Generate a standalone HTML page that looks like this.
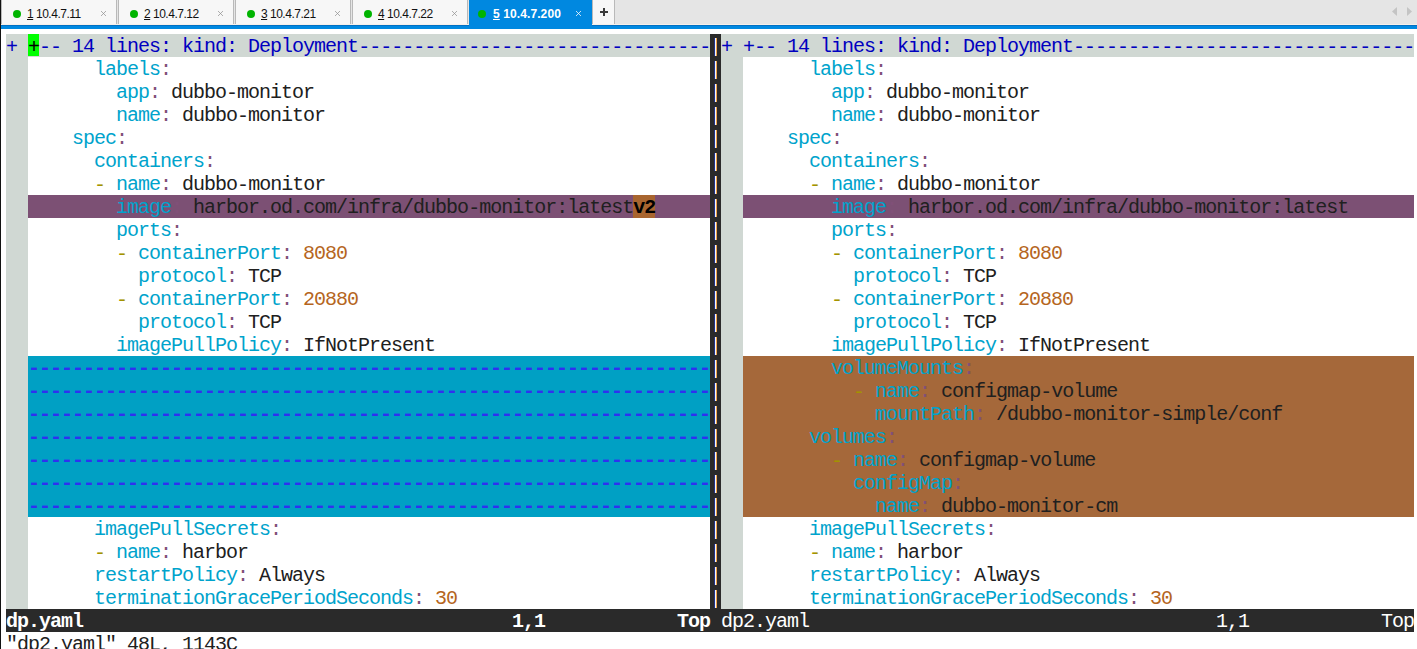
<!DOCTYPE html>
<html><head><meta charset="utf-8"><style>
html,body{margin:0;padding:0;}
body{width:1417px;height:649px;overflow:hidden;position:relative;background:#ffffff;font-family:"Liberation Mono",monospace;}
.row{position:absolute;height:23px;line-height:23px;white-space:pre;font-family:"Liberation Mono",monospace;font-size:20px;letter-spacing:-1.000px;color:#202020;padding-top:1px;box-sizing:border-box}
.lo{position:relative;top:1px}
.fold{color:#0000c0}
.cur{color:#000}
.key{color:#00a3cc}
.colon{color:#805078}
.val{color:#202020}
.num{color:#b5651d}
.dash{color:#a39300}
.fill{color:#3030f0;font-weight:bold}
.dtxt{color:#000;font-weight:bold}
.stb{color:#fff;font-weight:bold}
.st{color:#fff}
#tabbar{position:absolute;left:0;top:0;width:1417px;height:25px;background:#e5e5e5}
.tab{position:absolute;top:0;height:24px;box-sizing:border-box}
.dot{position:absolute;top:10px;width:8px;height:8px;border-radius:50%;background:#00b400}
.tl{position:absolute;top:6px;line-height:16px;white-space:pre;font-family:"Liberation Sans",sans-serif;font-size:12px}
.x{position:absolute;right:10px;top:4px;font-size:14px;line-height:18px}
</style></head><body>
<div id="tabbar"></div>
<div class="tab" style="left:1px;width:116px;background:#f7f7f7;border-left:1px solid #b9b9b9;border-right:1px solid #b9b9b9;color:#1a1a1a"></div><div class="dot" style="left:13px"></div><div class="tl" style="left:27px;letter-spacing:-0.5px;color:#111"><u>1</u> 10.4.7.11</div><svg style="position:absolute;left:101px;top:11px" width="6" height="6"><path d="M0 0L5 5M5 0L0 5" stroke="#8f8f8f" stroke-width="0.9" stroke-opacity="0.8" fill="none"/></svg><div class="tab" style="left:118px;width:116px;background:#f7f7f7;border-left:1px solid #b9b9b9;border-right:1px solid #b9b9b9;color:#1a1a1a"></div><div class="dot" style="left:130px"></div><div class="tl" style="left:144px;letter-spacing:-0.5px;color:#111"><u>2</u> 10.4.7.12</div><svg style="position:absolute;left:218px;top:11px" width="6" height="6"><path d="M0 0L5 5M5 0L0 5" stroke="#8f8f8f" stroke-width="0.9" stroke-opacity="0.8" fill="none"/></svg><div class="tab" style="left:235px;width:116px;background:#f7f7f7;border-left:1px solid #b9b9b9;border-right:1px solid #b9b9b9;color:#1a1a1a"></div><div class="dot" style="left:247px"></div><div class="tl" style="left:261px;letter-spacing:-0.5px;color:#111"><u>3</u> 10.4.7.21</div><svg style="position:absolute;left:335px;top:11px" width="6" height="6"><path d="M0 0L5 5M5 0L0 5" stroke="#8f8f8f" stroke-width="0.9" stroke-opacity="0.8" fill="none"/></svg><div class="tab" style="left:352px;width:116px;background:#f7f7f7;border-left:1px solid #b9b9b9;border-right:1px solid #b9b9b9;color:#1a1a1a"></div><div class="dot" style="left:364px"></div><div class="tl" style="left:378px;letter-spacing:-0.5px;color:#111"><u>4</u> 10.4.7.22</div><svg style="position:absolute;left:452px;top:11px" width="6" height="6"><path d="M0 0L5 5M5 0L0 5" stroke="#8f8f8f" stroke-width="0.9" stroke-opacity="0.8" fill="none"/></svg><div class="tab" style="left:469px;width:123px;background:#0088e0"></div><div class="dot" style="left:478px"></div><div class="tl" style="left:493px;color:#fff;letter-spacing:0.1px;font-weight:bold"><u>5</u> 10.4.7.200</div><svg style="position:absolute;left:576px;top:11px" width="6" height="6"><path d="M0 0L5 5M5 0L0 5" stroke="#ffffff" stroke-width="0.9" stroke-opacity="0.85" fill="none"/></svg>
<div style="position:absolute;left:592px;top:0;width:23px;height:24px;background:#f7f7f7;border-left:1px solid #b9b9b9;border-right:1px solid #b9b9b9;box-sizing:border-box"></div>
<svg style="position:absolute;left:599px;top:7px" width="10" height="10"><path d="M1 5H9M5 1V9" stroke="#3a3a3a" stroke-width="2" fill="none"/></svg>
<svg style="position:absolute;left:1385px;top:0" width="32" height="24"><path d="M7 11.5L12 7V16Z" fill="#c4c4c4"/><path d="M22 7L27 11.5L22 16Z" fill="#c4c4c4"/></svg>
<div style="position:absolute;left:0;top:24px;width:1417px;height:1px;background:#f6f0ea"></div>
<div style="position:absolute;left:0;top:25px;width:1417px;height:1px;background:#0070c4"></div>
<div style="position:absolute;left:469px;top:24px;width:123px;height:2px;background:#0088e0"></div>
<div style="position:absolute;left:0;top:26px;width:1417px;height:3px;background:#0088e0"></div>
<div style="position:absolute;left:0;top:0;width:1px;height:649px;background:#111"></div>
<div style="position:absolute;left:6px;top:34px;width:22px;height:575px;background:#d0d8d3;"></div>
<div style="position:absolute;left:721px;top:34px;width:22px;height:575px;background:#d0d8d3;"></div>
<div style="position:absolute;left:6px;top:34px;width:704px;height:23px;background:#d0d8d3;"></div>
<div style="position:absolute;left:721px;top:34px;width:693px;height:23px;background:#d0d8d3;"></div>
<div style="position:absolute;left:28px;top:34px;width:11px;height:22px;background:#00ff00;"></div>
<div style="position:absolute;left:28px;top:195px;width:682px;height:23px;background:#7c5074;"></div>
<div style="position:absolute;left:743px;top:195px;width:671px;height:23px;background:#7c5074;"></div>
<div style="position:absolute;left:633px;top:195px;width:22px;height:23px;background:#a8652f;"></div>
<div style="position:absolute;left:28px;top:356px;width:682px;height:161px;background:#00a0c4;"></div>
<div style="position:absolute;left:743px;top:356px;width:671px;height:161px;background:#a5683a;"></div>
<div style="position:absolute;left:710px;top:34px;width:11px;height:575px;background:#2a2a2a;"></div>
<div style="position:absolute;left:6px;top:609px;width:1408px;height:23px;background:#2a2a2a;"></div>
<div class="row" style="left:6px;top:34px;"><span class="fold"><span class="lo">+</span> </span><span class="cur"><span class="lo">+</span></span><span class="fold"><span class="lo">--</span> 14 lines: kind: Deployment<span class="lo">--------------------------------</span></span></div>
<div class="row" style="left:721px;top:34px;"><span class="fold"><span class="lo">+</span> </span><span class="fold"><span class="lo">+--</span> 14 lines: kind: Deployment<span class="lo">-------------------------------</span></span></div>
<div class="row" style="left:28px;top:57px;">      <span class="key">labels</span><span class="colon">:</span></div>
<div class="row" style="left:743px;top:57px;">      <span class="key">labels</span><span class="colon">:</span></div>
<div class="row" style="left:28px;top:80px;">        <span class="key">app</span><span class="colon">:</span> <span class="val">dubbo<span class="lo">-</span>monitor</span></div>
<div class="row" style="left:743px;top:80px;">        <span class="key">app</span><span class="colon">:</span> <span class="val">dubbo<span class="lo">-</span>monitor</span></div>
<div class="row" style="left:28px;top:103px;">        <span class="key">name</span><span class="colon">:</span> <span class="val">dubbo<span class="lo">-</span>monitor</span></div>
<div class="row" style="left:743px;top:103px;">        <span class="key">name</span><span class="colon">:</span> <span class="val">dubbo<span class="lo">-</span>monitor</span></div>
<div class="row" style="left:28px;top:126px;">    <span class="key">spec</span><span class="colon">:</span></div>
<div class="row" style="left:743px;top:126px;">    <span class="key">spec</span><span class="colon">:</span></div>
<div class="row" style="left:28px;top:149px;">      <span class="key">containers</span><span class="colon">:</span></div>
<div class="row" style="left:743px;top:149px;">      <span class="key">containers</span><span class="colon">:</span></div>
<div class="row" style="left:28px;top:172px;">      <span class="dash"><span class="lo">-</span></span> <span class="key">name</span><span class="colon">:</span> <span class="val">dubbo<span class="lo">-</span>monitor</span></div>
<div class="row" style="left:743px;top:172px;">      <span class="dash"><span class="lo">-</span></span> <span class="key">name</span><span class="colon">:</span> <span class="val">dubbo<span class="lo">-</span>monitor</span></div>
<div class="row" style="left:28px;top:195px;">        <span class="key">image</span><span class="colon">:</span> <span class="val">harbor.od.com/infra/dubbo<span class="lo">-</span>monitor:latest</span><span class="dtxt">v2</span></div>
<div class="row" style="left:743px;top:195px;">        <span class="key">image</span><span class="colon">:</span> <span class="val">harbor.od.com/infra/dubbo<span class="lo">-</span>monitor:latest</span></div>
<div class="row" style="left:28px;top:218px;">        <span class="key">ports</span><span class="colon">:</span></div>
<div class="row" style="left:743px;top:218px;">        <span class="key">ports</span><span class="colon">:</span></div>
<div class="row" style="left:28px;top:241px;">        <span class="dash"><span class="lo">-</span></span> <span class="key">containerPort</span><span class="colon">:</span> <span class="num">8080</span></div>
<div class="row" style="left:743px;top:241px;">        <span class="dash"><span class="lo">-</span></span> <span class="key">containerPort</span><span class="colon">:</span> <span class="num">8080</span></div>
<div class="row" style="left:28px;top:264px;">          <span class="key">protocol</span><span class="colon">:</span> <span class="val">TCP</span></div>
<div class="row" style="left:743px;top:264px;">          <span class="key">protocol</span><span class="colon">:</span> <span class="val">TCP</span></div>
<div class="row" style="left:28px;top:287px;">        <span class="dash"><span class="lo">-</span></span> <span class="key">containerPort</span><span class="colon">:</span> <span class="num">20880</span></div>
<div class="row" style="left:743px;top:287px;">        <span class="dash"><span class="lo">-</span></span> <span class="key">containerPort</span><span class="colon">:</span> <span class="num">20880</span></div>
<div class="row" style="left:28px;top:310px;">          <span class="key">protocol</span><span class="colon">:</span> <span class="val">TCP</span></div>
<div class="row" style="left:743px;top:310px;">          <span class="key">protocol</span><span class="colon">:</span> <span class="val">TCP</span></div>
<div class="row" style="left:28px;top:333px;">        <span class="key">imagePullPolicy</span><span class="colon">:</span> <span class="val">IfNotPresent</span></div>
<div class="row" style="left:743px;top:333px;">        <span class="key">imagePullPolicy</span><span class="colon">:</span> <span class="val">IfNotPresent</span></div>
<div class="row" style="left:28px;top:356px;"><span class="fill">--------------------------------------------------------------</span></div>
<div class="row" style="left:743px;top:356px;">        <span class="key">volumeMounts</span><span class="colon">:</span></div>
<div class="row" style="left:28px;top:379px;"><span class="fill">--------------------------------------------------------------</span></div>
<div class="row" style="left:743px;top:379px;">          <span class="dash"><span class="lo">-</span></span> <span class="key">name</span><span class="colon">:</span> <span class="val">configmap<span class="lo">-</span>volume</span></div>
<div class="row" style="left:28px;top:402px;"><span class="fill">--------------------------------------------------------------</span></div>
<div class="row" style="left:743px;top:402px;">            <span class="key">mountPath</span><span class="colon">:</span> <span class="val">/dubbo<span class="lo">-</span>monitor<span class="lo">-</span>simple/conf</span></div>
<div class="row" style="left:28px;top:425px;"><span class="fill">--------------------------------------------------------------</span></div>
<div class="row" style="left:743px;top:425px;">      <span class="key">volumes</span><span class="colon">:</span></div>
<div class="row" style="left:28px;top:448px;"><span class="fill">--------------------------------------------------------------</span></div>
<div class="row" style="left:743px;top:448px;">        <span class="dash"><span class="lo">-</span></span> <span class="key">name</span><span class="colon">:</span> <span class="val">configmap<span class="lo">-</span>volume</span></div>
<div class="row" style="left:28px;top:471px;"><span class="fill">--------------------------------------------------------------</span></div>
<div class="row" style="left:743px;top:471px;">          <span class="key">configMap</span><span class="colon">:</span></div>
<div class="row" style="left:28px;top:494px;"><span class="fill">--------------------------------------------------------------</span></div>
<div class="row" style="left:743px;top:494px;">            <span class="key">name</span><span class="colon">:</span> <span class="val">dubbo<span class="lo">-</span>monitor<span class="lo">-</span>cm</span></div>
<div class="row" style="left:28px;top:517px;">      <span class="key">imagePullSecrets</span><span class="colon">:</span></div>
<div class="row" style="left:743px;top:517px;">      <span class="key">imagePullSecrets</span><span class="colon">:</span></div>
<div class="row" style="left:28px;top:540px;">      <span class="dash"><span class="lo">-</span></span> <span class="key">name</span><span class="colon">:</span> <span class="val">harbor</span></div>
<div class="row" style="left:743px;top:540px;">      <span class="dash"><span class="lo">-</span></span> <span class="key">name</span><span class="colon">:</span> <span class="val">harbor</span></div>
<div class="row" style="left:28px;top:563px;">      <span class="key">restartPolicy</span><span class="colon">:</span> <span class="val">Always</span></div>
<div class="row" style="left:743px;top:563px;">      <span class="key">restartPolicy</span><span class="colon">:</span> <span class="val">Always</span></div>
<div class="row" style="left:28px;top:586px;">      <span class="key">terminationGracePeriodSeconds</span><span class="colon">:</span> <span class="num">30</span></div>
<div class="row" style="left:743px;top:586px;">      <span class="key">terminationGracePeriodSeconds</span><span class="colon">:</span> <span class="num">30</span></div>
<div style="position:absolute;left:714px;top:38px;width:1px;height:18px;background:#22308a;"></div>
<div style="position:absolute;left:715px;top:38px;width:1px;height:18px;background:#eef8ff;"></div>
<div style="position:absolute;left:716px;top:38px;width:1px;height:18px;background:#f0a048;"></div>
<div style="position:absolute;left:714px;top:61px;width:1px;height:18px;background:#22308a;"></div>
<div style="position:absolute;left:715px;top:61px;width:1px;height:18px;background:#eef8ff;"></div>
<div style="position:absolute;left:716px;top:61px;width:1px;height:18px;background:#f0a048;"></div>
<div style="position:absolute;left:714px;top:84px;width:1px;height:18px;background:#22308a;"></div>
<div style="position:absolute;left:715px;top:84px;width:1px;height:18px;background:#eef8ff;"></div>
<div style="position:absolute;left:716px;top:84px;width:1px;height:18px;background:#f0a048;"></div>
<div style="position:absolute;left:714px;top:107px;width:1px;height:18px;background:#22308a;"></div>
<div style="position:absolute;left:715px;top:107px;width:1px;height:18px;background:#eef8ff;"></div>
<div style="position:absolute;left:716px;top:107px;width:1px;height:18px;background:#f0a048;"></div>
<div style="position:absolute;left:714px;top:130px;width:1px;height:18px;background:#22308a;"></div>
<div style="position:absolute;left:715px;top:130px;width:1px;height:18px;background:#eef8ff;"></div>
<div style="position:absolute;left:716px;top:130px;width:1px;height:18px;background:#f0a048;"></div>
<div style="position:absolute;left:714px;top:153px;width:1px;height:18px;background:#22308a;"></div>
<div style="position:absolute;left:715px;top:153px;width:1px;height:18px;background:#eef8ff;"></div>
<div style="position:absolute;left:716px;top:153px;width:1px;height:18px;background:#f0a048;"></div>
<div style="position:absolute;left:714px;top:176px;width:1px;height:18px;background:#22308a;"></div>
<div style="position:absolute;left:715px;top:176px;width:1px;height:18px;background:#eef8ff;"></div>
<div style="position:absolute;left:716px;top:176px;width:1px;height:18px;background:#f0a048;"></div>
<div style="position:absolute;left:714px;top:199px;width:1px;height:18px;background:#22308a;"></div>
<div style="position:absolute;left:715px;top:199px;width:1px;height:18px;background:#eef8ff;"></div>
<div style="position:absolute;left:716px;top:199px;width:1px;height:18px;background:#f0a048;"></div>
<div style="position:absolute;left:714px;top:222px;width:1px;height:18px;background:#22308a;"></div>
<div style="position:absolute;left:715px;top:222px;width:1px;height:18px;background:#eef8ff;"></div>
<div style="position:absolute;left:716px;top:222px;width:1px;height:18px;background:#f0a048;"></div>
<div style="position:absolute;left:714px;top:245px;width:1px;height:18px;background:#22308a;"></div>
<div style="position:absolute;left:715px;top:245px;width:1px;height:18px;background:#eef8ff;"></div>
<div style="position:absolute;left:716px;top:245px;width:1px;height:18px;background:#f0a048;"></div>
<div style="position:absolute;left:714px;top:268px;width:1px;height:18px;background:#22308a;"></div>
<div style="position:absolute;left:715px;top:268px;width:1px;height:18px;background:#eef8ff;"></div>
<div style="position:absolute;left:716px;top:268px;width:1px;height:18px;background:#f0a048;"></div>
<div style="position:absolute;left:714px;top:291px;width:1px;height:18px;background:#22308a;"></div>
<div style="position:absolute;left:715px;top:291px;width:1px;height:18px;background:#eef8ff;"></div>
<div style="position:absolute;left:716px;top:291px;width:1px;height:18px;background:#f0a048;"></div>
<div style="position:absolute;left:714px;top:314px;width:1px;height:18px;background:#22308a;"></div>
<div style="position:absolute;left:715px;top:314px;width:1px;height:18px;background:#eef8ff;"></div>
<div style="position:absolute;left:716px;top:314px;width:1px;height:18px;background:#f0a048;"></div>
<div style="position:absolute;left:714px;top:337px;width:1px;height:18px;background:#22308a;"></div>
<div style="position:absolute;left:715px;top:337px;width:1px;height:18px;background:#eef8ff;"></div>
<div style="position:absolute;left:716px;top:337px;width:1px;height:18px;background:#f0a048;"></div>
<div style="position:absolute;left:714px;top:360px;width:1px;height:18px;background:#22308a;"></div>
<div style="position:absolute;left:715px;top:360px;width:1px;height:18px;background:#eef8ff;"></div>
<div style="position:absolute;left:716px;top:360px;width:1px;height:18px;background:#f0a048;"></div>
<div style="position:absolute;left:714px;top:383px;width:1px;height:18px;background:#22308a;"></div>
<div style="position:absolute;left:715px;top:383px;width:1px;height:18px;background:#eef8ff;"></div>
<div style="position:absolute;left:716px;top:383px;width:1px;height:18px;background:#f0a048;"></div>
<div style="position:absolute;left:714px;top:406px;width:1px;height:18px;background:#22308a;"></div>
<div style="position:absolute;left:715px;top:406px;width:1px;height:18px;background:#eef8ff;"></div>
<div style="position:absolute;left:716px;top:406px;width:1px;height:18px;background:#f0a048;"></div>
<div style="position:absolute;left:714px;top:429px;width:1px;height:18px;background:#22308a;"></div>
<div style="position:absolute;left:715px;top:429px;width:1px;height:18px;background:#eef8ff;"></div>
<div style="position:absolute;left:716px;top:429px;width:1px;height:18px;background:#f0a048;"></div>
<div style="position:absolute;left:714px;top:452px;width:1px;height:18px;background:#22308a;"></div>
<div style="position:absolute;left:715px;top:452px;width:1px;height:18px;background:#eef8ff;"></div>
<div style="position:absolute;left:716px;top:452px;width:1px;height:18px;background:#f0a048;"></div>
<div style="position:absolute;left:714px;top:475px;width:1px;height:18px;background:#22308a;"></div>
<div style="position:absolute;left:715px;top:475px;width:1px;height:18px;background:#eef8ff;"></div>
<div style="position:absolute;left:716px;top:475px;width:1px;height:18px;background:#f0a048;"></div>
<div style="position:absolute;left:714px;top:498px;width:1px;height:18px;background:#22308a;"></div>
<div style="position:absolute;left:715px;top:498px;width:1px;height:18px;background:#eef8ff;"></div>
<div style="position:absolute;left:716px;top:498px;width:1px;height:18px;background:#f0a048;"></div>
<div style="position:absolute;left:714px;top:521px;width:1px;height:18px;background:#22308a;"></div>
<div style="position:absolute;left:715px;top:521px;width:1px;height:18px;background:#eef8ff;"></div>
<div style="position:absolute;left:716px;top:521px;width:1px;height:18px;background:#f0a048;"></div>
<div style="position:absolute;left:714px;top:544px;width:1px;height:18px;background:#22308a;"></div>
<div style="position:absolute;left:715px;top:544px;width:1px;height:18px;background:#eef8ff;"></div>
<div style="position:absolute;left:716px;top:544px;width:1px;height:18px;background:#f0a048;"></div>
<div style="position:absolute;left:714px;top:567px;width:1px;height:18px;background:#22308a;"></div>
<div style="position:absolute;left:715px;top:567px;width:1px;height:18px;background:#eef8ff;"></div>
<div style="position:absolute;left:716px;top:567px;width:1px;height:18px;background:#f0a048;"></div>
<div style="position:absolute;left:714px;top:590px;width:1px;height:18px;background:#22308a;"></div>
<div style="position:absolute;left:715px;top:590px;width:1px;height:18px;background:#eef8ff;"></div>
<div style="position:absolute;left:716px;top:590px;width:1px;height:18px;background:#f0a048;"></div>
<div class="row" style="left:6px;top:609px;"><span class="stb">dp.yaml                                       1,1            Top</span></div>
<div class="row" style="left:721px;top:609px;"><span class="st">dp2.yaml                                     1,1            Top</span></div>
<div class="row" style="left:6px;top:632px;"><span class="val">&quot;dp2.yaml&quot; 48L, 1143C</span></div>
</body></html>
